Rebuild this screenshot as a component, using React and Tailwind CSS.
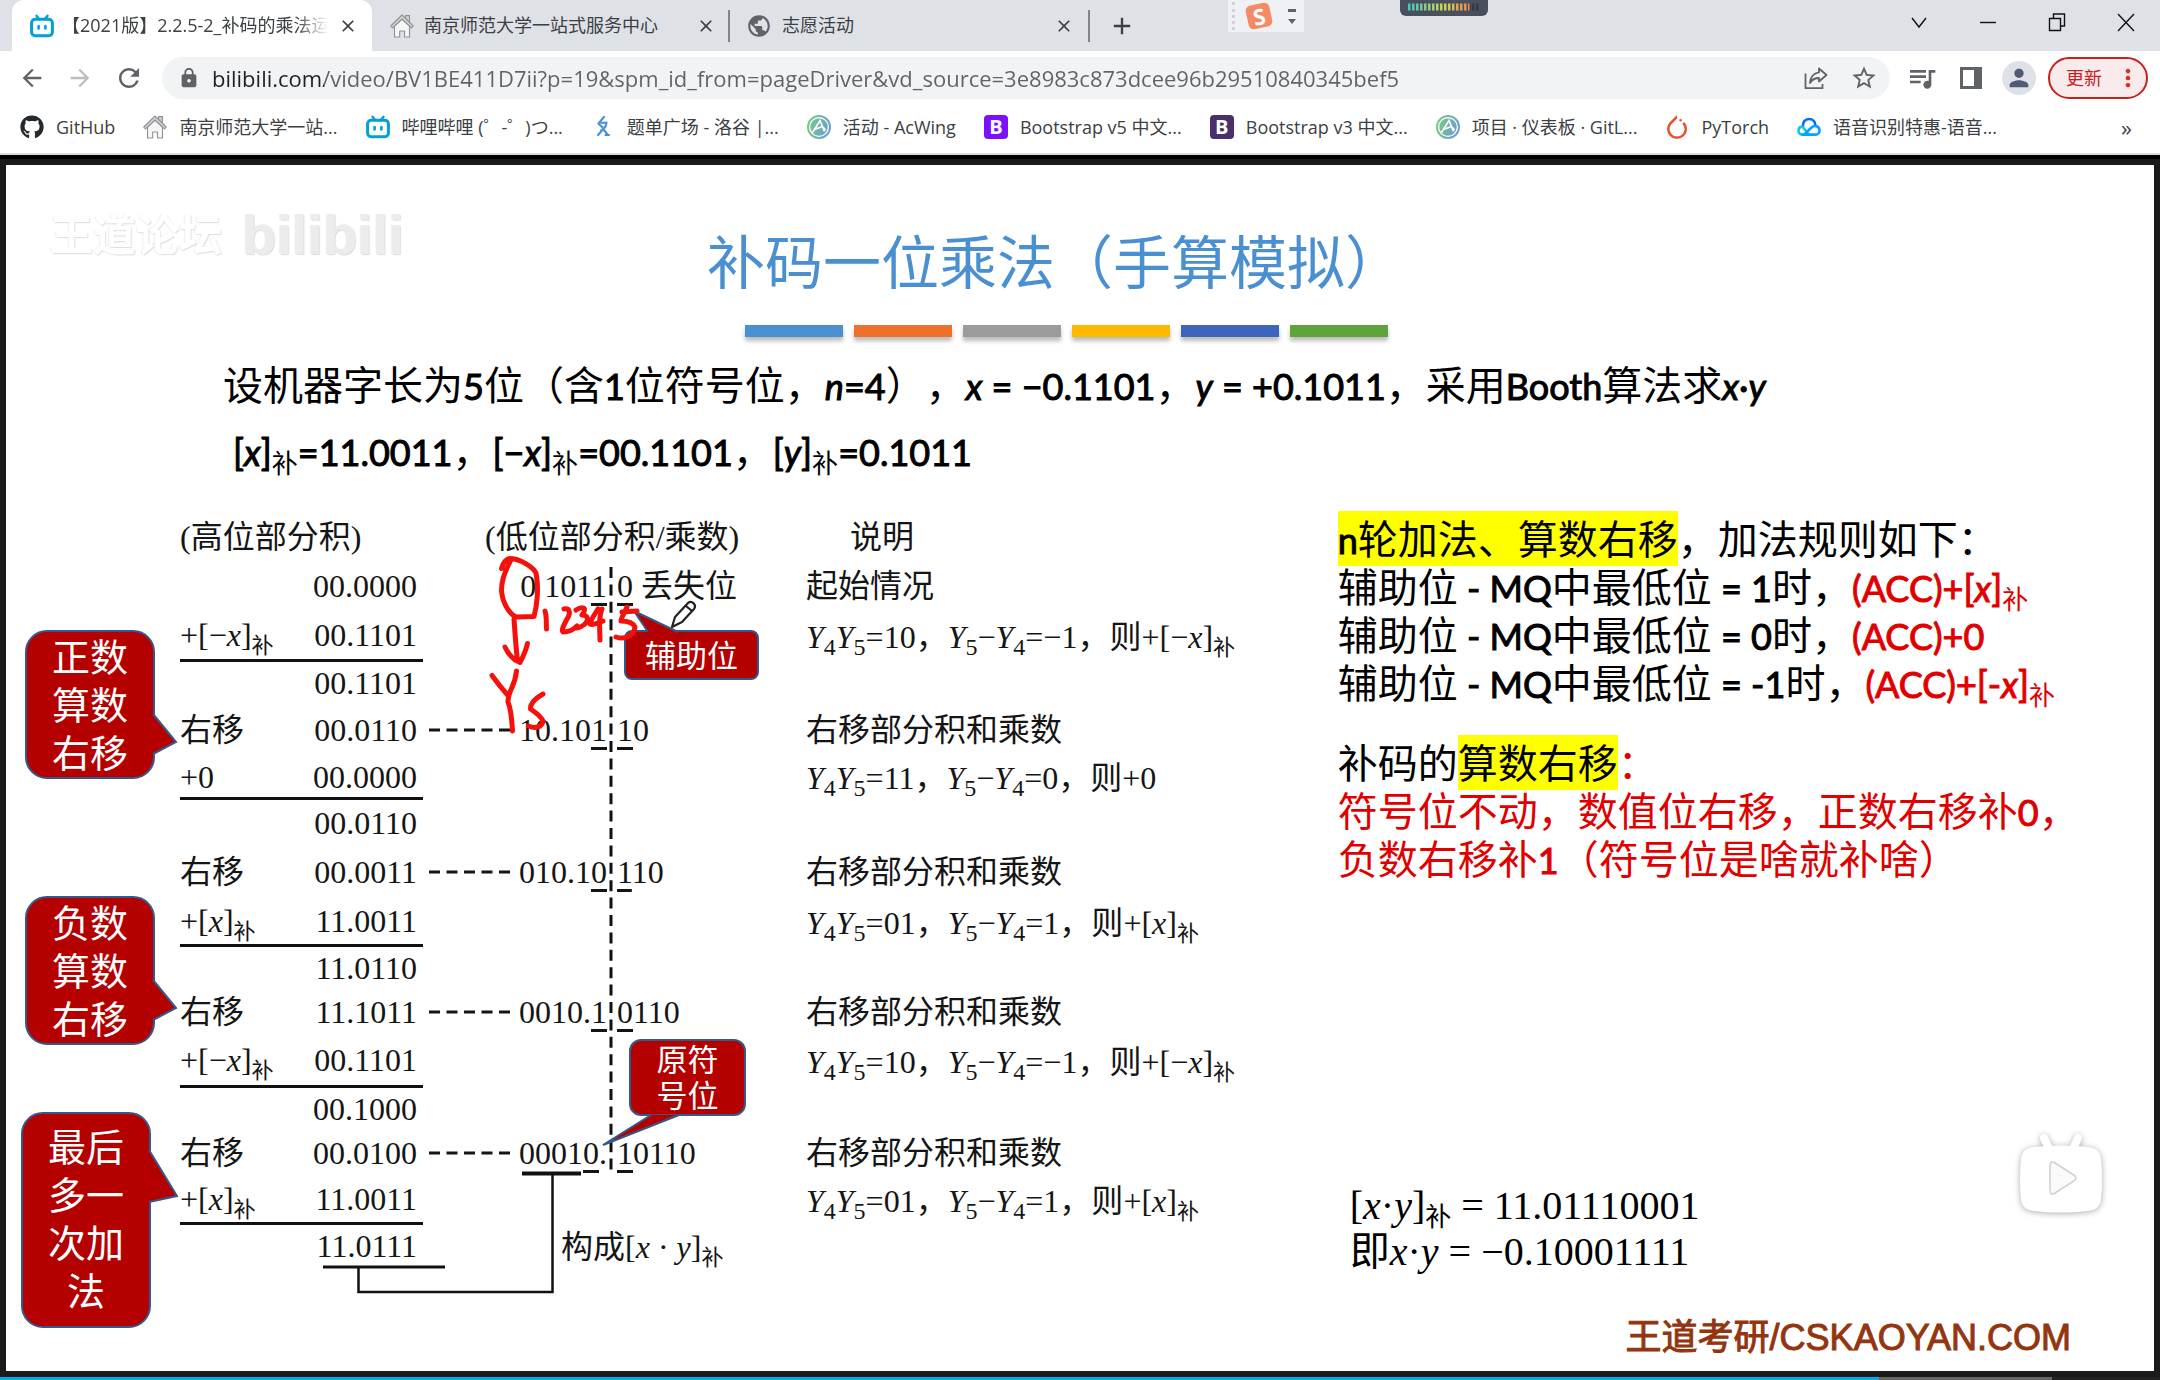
import React from "react";
import {
  MdArrowBack, MdArrowForward, MdRefresh, MdLock, MdStarBorder, MdQueueMusic,
  MdPerson, MdMoreVert, MdPublic, MdClose, MdAdd,
} from "react-icons/md";
import { FaGithub } from "react-icons/fa";
import { SiPytorch } from "react-icons/si";

/* ---------- icons ---------- */

const BiliTv = () => (
  <svg viewBox="0 0 24 24" className="size-6 shrink-0" fill="none" stroke="#00a1d6" strokeWidth="3" strokeLinecap="round" strokeLinejoin="round">
    <path d="M6.5 1.8 9 5M17.5 1.8 15 5" strokeWidth="2.4" />
    <rect x="1.6" y="5.2" width="20.8" height="16.6" rx="3.6" />
    <path d="M8.6 12v2.4M15.4 12v2.4" strokeWidth="2.6" />
  </svg>
);

const House = () => (
  <svg viewBox="0 0 24 24" className="size-6 shrink-0" stroke="#8f9194" strokeWidth="1.1" strokeLinejoin="round">
    <path d="M15.5 4V1.5h4V8" fill="#c9cbce" />
    <path d="M4.5 12v11h5.2v-6h4.8v6h5V12L12 5z" fill="#f6f6f6" />
    <path d="M12 1 .8 12l1.7 1.8L12 5l9.5 8.8 1.7-1.8z" fill="#d3d5d8" />
  </svg>
);

const Luogu = () => (
  <svg viewBox="0 0 16 24" className="size-6 shrink-0" fill="none" stroke="#4b93d8" strokeWidth="2.2" strokeLinecap="round" strokeLinejoin="round">
    <path d="M9 2 3.500 8.500 8 13M6.500 8l5-.5-1 4L3 20M6 15.500l2.500-1L13 20M10.500 20H14" />
  </svg>
);

const AcWing = () => (
  <svg viewBox="0 0 24 24" className="size-6 shrink-0">
    <defs>
      <linearGradient id="acw" x1="0" x2="1" y1="0" y2=".3">
        <stop offset="0" stopColor="#7ccf7a" />
        <stop offset="1" stopColor="#6a9fd0" />
      </linearGradient>
    </defs>
    <circle cx="12" cy="12" r="12" fill="url(#acw)" />
    <circle cx="12" cy="12" r="9.400" fill="none" stroke="#fff" strokeWidth="1.300" />
    <path d="M5.500 17.500 13 5.500l4.500 11M7.500 14.500l8 -3 3 3.500" fill="none" stroke="#fff" strokeWidth="1.700" />
  </svg>
);

const TencentCloud = () => (
  <svg viewBox="0 0 24 24" className="size-6 shrink-0" fill="none" strokeWidth="2.600" strokeLinecap="round">
    <path d="M6 11.500C5.500 7 8 4 12 4s6.500 3 6.300 6" stroke="#006eff" />
    <path d="M12 19.500 6.500 13C5.200 10.600 1.500 12 1.500 15.600c0 2.400 1.700 4 4 4" stroke="#14c6e8" />
    <path d="M5.500 19.600h13c2.300 0 4-1.700 4-4.200 0-4.200-5.200-5.600-7.700-3.100L8 18.600" stroke="#00a3ff" />
  </svg>
);

const Share = () => (
  <svg viewBox="0 0 24 24" className="size-6" fill="none" stroke="#5f6368" strokeWidth="1.800" strokeLinejoin="round">
    <path d="M1.500 7.500v14.700h17V18" />
    <path d="M15 2.500 22.500 9 15 15.500V12c-4.500 0-7 1.500-9 5 .3-5.500 3.500-10 9-10.700z" />
  </svg>
);

const SidePanel = () => (
  <svg viewBox="0 0 22 22" className="size-[22px]">
    <rect x="1.500" y="1.500" width="19" height="19" fill="none" stroke="#5f6368" strokeWidth="3" />
    <rect x="14" y="1" width="7" height="20" fill="#5f6368" />
  </svg>
);

const BBadge = ({ className }) => (
  <span className={"flex size-6 shrink-0 items-center justify-center rounded-[4px] text-[20px] font-bold leading-none text-white " + className}>B</span>
);

/* ---------- browser chrome ---------- */

const CloseTab = () => (
  <button aria-label="关闭标签页" className="flex size-6 shrink-0 items-center justify-center text-[#3c4043]">
    <MdClose className="size-5" />
  </button>
);

function TabStrip() {
  return (
    <header className="flex h-[51px] items-start bg-[#dee1e6] text-[18px] text-[#3c4043]">
      <nav className="flex h-full items-center pl-3">
        <div className="flex h-full w-[360px] items-center rounded-t-xl bg-white pr-3 pl-[18px]">
          <BiliTv />
          <span className="mr-2 ml-2 flex-1 overflow-hidden whitespace-nowrap [mask-image:linear-gradient(to_right,#000_88%,transparent)]">
            【2021版】2.2.5-2_补码的乘法运
          </span>
          <CloseTab />
        </div>
        <div className="flex h-8 w-[358px] items-center border-r-2 border-[#808387] pr-[10px] pl-[18px]">
          <House />
          <span className="ml-[10px] flex-1 whitespace-nowrap">南京师范大学一站式服务中心</span>
          <CloseTab />
        </div>
        <div className="flex h-8 w-[360px] items-center border-r-2 border-[#808387] pr-3 pl-4">
          <MdPublic className="size-[26px] text-[#5f6368]" />
          <span className="ml-[10px] flex-1 whitespace-nowrap">志愿活动</span>
          <CloseTab />
        </div>
        <button aria-label="新标签页" className="ml-4 flex size-8 items-center justify-center">
          <MdAdd className="size-[28px]" />
        </button>
      </nav>
      <div className="ml-[90px] flex h-8 w-[76px] items-center gap-3 bg-[#f0f1f4] pl-1">
        <span className="h-7 border-l-[3px] border-dotted border-[#d0d2d6]" />
        <span className="flex size-6 -rotate-12 items-center justify-center rounded-[5px] bg-[#f58b66] text-[22px] font-bold leading-none text-white">S</span>
        <svg viewBox="0 0 10 18" className="ml-1 h-[18px] w-[10px]" fill="#5f6368">
          <path d="M1 2h8v3H1zM1 12h8l-4 5z" />
        </svg>
      </div>
      <div className="ml-[96px] flex h-4 w-[88px] items-center justify-center rounded-b-md bg-[#4a4f5e]">
        <svg viewBox="0 0 72 10" className="h-[10px] w-[72px]">
          <defs>
            <linearGradient id="meter" gradientUnits="userSpaceOnUse" x1="0" x2="72" y1="0" y2="0">
              <stop offset="0" stopColor="#3fc8c0" />
              <stop offset=".5" stopColor="#c9d84a" />
              <stop offset=".85" stopColor="#f0864a" />
              <stop offset=".86" stopColor="#343848" />
            </linearGradient>
          </defs>
          <path d="M0 4H72" stroke="url(#meter)" strokeWidth="7" strokeDasharray="2.500 1.500" />
        </svg>
      </div>
      <div className="ml-auto flex h-[43px] items-center gap-[45px] pr-[22px]">
        {[
          ["搜索标签页", "M5 8l7 9 7-9"],
          ["最小化", "M4 12.500h16"],
          ["还原", "M4.500 8.500h11v12h-11zM8.500 8v-4h11v12h-4"],
          ["关闭", "M4 4l16 17M20 4 4 21"],
        ].map(([label, d]) => (
          <button key={label} aria-label={label}>
            <svg viewBox="0 0 24 24" className="size-6" fill="none" stroke="#111" strokeWidth="1.400"><path d={d} /></svg>
          </button>
        ))}
      </div>
    </header>
  );
}

function Toolbar() {
  return (
    <div className="flex h-[54px] items-center bg-white pr-3 pl-[18px] text-[#5f6368]">
      <button aria-label="后退"><MdArrowBack className="size-7" /></button>
      <button aria-label="前进" className="ml-5 text-[#bbbdbf]"><MdArrowForward className="size-7" /></button>
      <button aria-label="重新加载" className="ml-5"><MdRefresh className="size-[30px]" /></button>
      <div className="ml-[18px] flex h-[42px] flex-1 items-center rounded-full bg-[#f1f3f4] pr-3 pl-4">
        <MdLock className="size-[22px]" />
        <input
          aria-label="地址栏"
          readOnly
          value="bilibili.com/video/BV1BE411D7ii?p=19&spm_id_from=pageDriver&vd_source=3e8983c873dcee96b29510840345bef5"
          className="ml-3 flex-1 bg-[linear-gradient(90deg,#202124_112px,#5f6368_112px)] bg-clip-text text-[22px] text-transparent outline-none"
        />
        <button aria-label="分享"><Share /></button>
        <button aria-label="收藏" className="ml-[22px]"><MdStarBorder className="size-7" /></button>
      </div>
      <button aria-label="媒体" className="ml-4"><MdQueueMusic className="size-8" /></button>
      <button aria-label="侧边栏" className="ml-[22px]"><SidePanel /></button>
      <button aria-label="用户" className="ml-5 flex size-[34px] items-center justify-center rounded-full bg-[#dee1e6]">
        <MdPerson className="size-7 text-[#4f5b76]" />
      </button>
      <button className="ml-3 flex h-[42px] w-[100px] items-center justify-between rounded-full border-2 border-[#c5221f] bg-[#f9ebeb] pr-1 pl-4 text-[18px] text-[#c5221f]">
        更新
        <MdMoreVert className="size-7 text-[#d93025]" />
      </button>
    </div>
  );
}

const bookmarks = [
  [<FaGithub className="size-6 text-[#24292e]" />, "GitHub"],
  [<House />, "南京师范大学一站..."],
  [<BiliTv />, "哔哩哔哩 (゜-゜)つ..."],
  [<Luogu />, "题单广场 - 洛谷 |..."],
  [<AcWing />, "活动 - AcWing"],
  [<BBadge className="bg-[#7b11f8]" />, "Bootstrap v5 中文..."],
  [<BBadge className="bg-[#4a2f6d]" />, "Bootstrap v3 中文..."],
  [<AcWing />, "项目 · 仪表板 · GitL..."],
  [<SiPytorch className="size-6 text-[#ee4c2c]" />, "PyTorch"],
  [<TencentCloud />, "语音识别特惠-语音..."],
];

function Bookmarks() {
  return (
    <nav className="flex h-[50px] items-center gap-7 border-b-2 border-[#dadcda] bg-white pr-7 pb-1 pl-5 text-[18px] text-[#3c4043]">
      {bookmarks.map(([icon, text]) => (
        <a key={text} href="#" className="flex items-center gap-3 whitespace-nowrap">{icon}{text}</a>
      ))}
      <button aria-label="更多书签" className="ml-auto text-[22px]">»</button>
    </nav>
  );
}

/* ---------- slide pieces ---------- */

const L = ({ children, className = "" }) => (
  <span className={"font-[Lato] text-[36px] leading-none [-webkit-text-stroke:1px] " + className}>{children}</span>
);
const Bu = ({ className = "text-[26px]" }) => (
  <span className={"relative top-[7px] leading-none " + className}>补</span>
);
const U = ({ children }) => (
  <span className="underline decoration-[3px] underline-offset-[6px] [text-decoration-skip-ink:none]">{children}</span>
);
const Br = ({ neg }) => (
  <>+[{neg && "−"}<i>x</i>]<Bu className="text-[22px]" /></>
);
const Sub = ({ children }) => <span className="relative top-[7px] text-[24px] leading-none">{children}</span>;
const Yy = ({ v, d, children }) => (
  <>
    <i>Y</i><Sub>4</Sub><i>Y</i><Sub>5</Sub>={v}，<i>Y</i><Sub>5</Sub>−<i>Y</i><Sub>4</Sub>={d}，则{children}
  </>
);
const shiftNote = "右移部分积和乘数";

const rows = [
  { h: "h-[50px]", n: "00.0000", l: <>0&nbsp;101<U>1</U></>, r: <><U>0</U> 丢失位</>, note: "起始情况" },
  { h: "h-[51px]", a: <Br neg />, n: "00.1101", note: <Yy v="10" d="−1"><Br neg /></Yy>, line: true },
  { h: "h-[42px]", n: "00.1101" },
  { h: "h-[52px]", a: "右移", n: "00.0110", dash: true, l: <>10.10<U>1</U></>, r: <><U>1</U>0</>, note: shiftNote },
  { h: "h-[44px]", a: "+0", n: "00.0000", note: <Yy v="11" d="0">+0</Yy>, line: true },
  { h: "h-[46px]", n: "00.0110" },
  { h: "h-[52px]", a: "右移", n: "00.0011", dash: true, l: <>010.1<U>0</U></>, r: <><U>1</U>10</>, note: shiftNote },
  { h: "h-[49px]", a: <Br />, n: "11.0011", note: <Yy v="01" d="1"><Br /></Yy>, line: true },
  { h: "h-[42px]", n: "11.0110" },
  { h: "h-[46px]", a: "右移", n: "11.1011", dash: true, l: <>0010.<U>1</U></>, r: <><U>0</U>110</>, note: shiftNote },
  { h: "h-[53px]", a: <Br neg />, n: "00.1101", note: <Yy v="10" d="−1"><Br neg /></Yy>, line: true },
  { h: "h-[42px]", n: "00.1000" },
  { h: "h-[46px]", a: "右移", n: "00.0100", dash: true, l: <>0001<U>0</U>.</>, r: <><U>1</U>0110</>, note: shiftNote },
  { h: "h-[49px]", a: <Br />, n: "11.0011", note: <Yy v="01" d="1"><Br /></Yy>, line: true },
  { h: "h-[42px]", n: "11.0111" },
];

function Steps() {
  return (
    <table className="w-full table-fixed border-separate border-spacing-0 text-left text-[32px] leading-[40px] whitespace-nowrap text-[#151515] font-['Liberation_Serif','Noto_Sans_CJK_SC',serif]">
      <colgroup>
        <col className="w-[113px]" /><col className="w-[130px]" /><col className="w-[93px]" />
        <col className="w-[95px]" /><col className="w-[195px]" /><col />
      </colgroup>
      <thead>
        <tr className="h-12">
          <th colSpan={2} className="p-0 font-normal">(高位部分积)</th>
          <th colSpan={3} className="p-0 pl-[62px] font-normal">(低位部分积/乘数)</th>
          <th className="p-0 pl-11 font-normal">说明</th>
        </tr>
      </thead>
      <tbody>
        {rows.map((r, i) => (
          <tr key={i} className={r.h}>
            <td className={r.line ? "border-b-[3px] border-[#111] p-0" : "p-0"}>{r.a}</td>
            <td className={r.line ? "border-b-[3px] border-[#111] p-0 pr-[6px] text-right" : "p-0 pr-[6px] text-right"}>{r.n}</td>
            <td className="p-0 pl-[6px]">
              {r.dash && (
                <svg viewBox="0 0 82 4" className="h-1 w-[82px]"><path d="M0 2h82" stroke="#151515" strokeWidth="3" strokeDasharray="11 6.500" /></svg>
              )}
            </td>
            <td className="p-0 pr-1"><div className="flex justify-end">{r.l && <span>{r.l}</span>}</div></td>
            <td className="p-0 pl-[6px]">{r.r}</td>
            <td className="p-0">{r.note}</td>
          </tr>
        ))}
      </tbody>
    </table>
  );
}

function Callout({ className, lines, pointer }) {
  return (
    <div className={"absolute border-2 border-[#35588a] bg-[#b50000] text-center text-white " + className}>
      {lines.map((t) => <div key={t} className="relative z-10">{t}</div>)}
      <svg className="absolute -top-0.5 -left-0.5 overflow-visible" width="1" height="1">
        <path d={pointer} fill="#b50000" stroke="#35588a" strokeWidth="2" />
      </svg>
    </div>
  );
}

/* Rules, dashed divider and the bracket that joins both halves of the result. */
function Wires() {
  return (
    <svg viewBox="6 513 800 830" width="800" height="830" className="pointer-events-none absolute top-0 left-0" fill="none" stroke="#111">
      <path d="M611 567V1173" strokeWidth="3" strokeDasharray="11 6.400" />
      <path d="M323 1267H445" strokeWidth="3" />
      <path d="M522 1173.500H581" strokeWidth="4" />
      <path d="M358.500 1267V1292H552.500V1174" strokeWidth="2.500" />
    </svg>
  );
}

/* Red pen marks and the pen cursor. */
function Ink() {
  return (
    <svg viewBox="6 513 800 830" width="800" height="830" className="pointer-events-none absolute top-0 left-0" fill="none" stroke="#f5100c" strokeWidth="5" strokeLinecap="round" strokeLinejoin="round">
      <path d="M501.500 568.500C503 562 507 558 511 558.500 520 559 533 567 536 573 539 588 537 606 534 616.500L516 617C508 613 502 601 501.500 590 501.500 576 508 566 511 560" />
      <path d="M514 619C515 634 516 648 517.500 661M505 647C509 656 514 660 520 662.500 524 655 526 650 527.500 643.500" />
      <path d="M492 675.500C498 684 504 691 508.500 696M516.500 671C515 687 508 690 508 702 511 709 512 722 512.500 731" />
      <path d="M543 694C536 698 530 703 530.500 709 535 712 541 716 543 721 542 727 536 729 528.500 726" />
      <path d="M545 611C547 617 546 623 546.500 629" />
      <path d="M564 609C570 608 571 613 567 619 564 625 561 630 563 632 567 632 573 630 577 626" />
      <path d="M576 610C582 606 588 607 582 615 590 615 590 624 577 628" />
      <path d="M598 609C595 614 591 619 590 624 594 626 599 622 603 621M602 609C598 618 600 630 600 640" />
      <path d="M627 607C625 612 621 618 621 621 627 621 633 623 635 627 634 636 625 640 616 637M622 612 637 611" />
      <g stroke="#222" strokeWidth="2.200" fill="#fff">
        <path d="M672 627 675 617 688 603C692 600 697 605 694 609L682 622Z" />
        <path d="M686 606 692 611" />
      </g>
    </svg>
  );
}

const bars = ["bg-[#4a8fd0]", "bg-[#ed702b]", "bg-[#9b9b9b]", "bg-[#ffba00]", "bg-[#3c65bb]", "bg-[#5ea43a]"];

function Slide() {
  return (
    <main className="relative flex-1 overflow-hidden border-x-[6px] border-t-[6px] border-[#1a1a1a] bg-white pt-[61px] pb-2 text-[40px] text-black [text-spacing-trim:space-all]">
      <div className="absolute top-[28px] left-[44px] flex items-center gap-5 whitespace-nowrap text-[43px] font-bold text-white [text-shadow:1px_1px_1px_#ddd,-1px_0_1px_#eee]">
        王道论坛
        <span className="font-['Liberation_Sans'] text-[56px] text-[#ececec]">bilibili</span>
      </div>

      <h1 className="pr-[50px] text-center text-[58px] leading-[72px] text-[#4a8fd0]">补码一位乘法（手算模拟）</h1>
      <div className="mt-[27px] flex justify-center gap-[11px] pr-7">
        {bars.map((c) => <span key={c} className={"h-3 w-[98px] shadow-[0_4px_4px_#0004] " + c} />)}
      </div>

      <p className="mt-[15px] pl-[217px] leading-[66px] whitespace-nowrap">
        设机器字长为<L>5</L>位（含<L>1</L>位符号位，<L><i>n</i>=4</L>），<L><i>x</i> = −0.1101</L>，<L><i>y</i> = +0.1011</L>，采用<L>Booth</L>算法求<L><i>x</i>·<i>y</i></L>
      </p>
      <p className="pl-[227px] leading-[66px] whitespace-nowrap">
        <L>[<i>x</i>]</L><Bu /><L>=11.0011</L>，<L>[−<i>x</i>]</L><Bu /><L>=00.1101</L>，<L>[<i>y</i>]</L><Bu /><L>=0.1011</L>
      </p>

      <section className="relative mt-[29px] flex">
        <div className="w-[62%] pl-[174px]"><Steps /></div>
        <Wires />
        <div className="absolute top-[714px] left-[555px] text-[32px] leading-[40px] text-[#151515] font-['Liberation_Serif','Noto_Sans_CJK_SC',serif]">
          构成[<i>x</i> · <i>y</i>]<Bu className="text-[22px]" />
        </div>

        <Callout className="top-[117px] left-[19px] w-[130px] rounded-[22px] pb-px text-[38px] leading-[48px]" lines={["正数", "算数", "右移"]} pointer="M128 84L151 112L128 124" />
        <Callout className="top-[383px] left-[19px] w-[130px] rounded-[22px] pb-px text-[38px] leading-[48px]" lines={["负数", "算数", "右移"]} pointer="M128 84L151 112L128 124" />
        <Callout className="top-[599px] left-[15px] w-[130px] rounded-[22px] pt-2 pb-3 text-[38px] leading-[48px]" lines={["最后", "多一", "次加", "法"]} pointer="M128 38L156 84L128 90" />
        <Callout className="top-[117px] left-[618px] w-[135px] rounded-[8px] text-[31px] leading-[46px]" lines={["辅助位"]} pointer="M24 2L10 -19L54 2" />
        <Callout className="top-[526px] left-[623px] w-[117px] rounded-[12px] pb-px text-[31px] leading-[36px]" lines={["原符", "号位"]} pointer="M22 76L-26 106L50 76" />
        <Ink />

        <div className="flex flex-1 flex-col pt-0.5 leading-[48px] whitespace-nowrap">
          <p><mark className="bg-[#ff0]"><L>n</L>轮加法、算数右移</mark>，加法规则如下：</p>
          <p>辅助位<L> - MQ</L>中最低位<L> = 1</L>时，<span className="text-[#e00000]"><L>(ACC)+[<i>x</i>]</L><Bu /></span></p>
          <p>辅助位<L> - MQ</L>中最低位<L> = 0</L>时，<L className="text-[#e00000]">(ACC)+0</L></p>
          <p>辅助位<L> - MQ</L>中最低位<L> = -1</L>时，<span className="text-[#e00000]"><L>(ACC)+[-<i>x</i>]</L><Bu /></span></p>
          <p className="mt-8">补码的<mark className="bg-[#ff0]">算数右移</mark><span className="text-[#e00000]">：</span></p>
          <p className="text-[#e00000]">符号位不动，数值位右移，正数右移补<L>0</L>，</p>
          <p className="text-[#e00000]">负数右移补<L>1</L>（符号位是啥就补啥）</p>
          <div className="mt-[300px] pl-3 text-[40px] leading-[46px] font-['Liberation_Serif','Noto_Sans_CJK_SC',serif]">
            <p>[<i>x</i>·<i>y</i>]<Bu /> = 11.01110001</p>
            <p>即<i>x</i>·<i>y</i> = −0.10001111</p>
          </div>
          <p className="mt-[39px] mr-[83px] self-end text-[36px] text-[#93350f] [-webkit-text-stroke:1px] font-['Liberation_Sans','Noto_Sans_CJK_SC',sans-serif]">
            王道考研/CSKAOYAN.COM
          </p>
        </div>

        <button aria-label="播放" className="absolute top-[617px] right-[46px]">
          <svg viewBox="0 0 94 94" className="size-[94px] drop-shadow-[0_1px_3px_#0005]">
            <path d="M30 8 35 19M64 8 59 19" stroke="#fff" strokeWidth="8" strokeLinecap="round" />
            <path d="M20 17Q47 14 74 17 86 18 87 29 89 50 87 69 86 80 74 81 47 84 20 81 8 80 7 69 5 50 7 29 8 18 20 17Z" fill="#fff" />
            <path d="M36 36v24q0 6 5 3l19-12q4-3 0-6L41 33q-5-3-5 3z" fill="#fafafa" stroke="#cfcfcf" strokeWidth="1.500" />
          </svg>
        </button>
      </section>
    </main>
  );
}

export default function App() {
  return (
    <div className="flex min-h-screen flex-col bg-black font-['Open_Sans','Noto_Sans_CJK_SC',sans-serif]" lang="zh-CN">
      <TabStrip />
      <Toolbar />
      <Bookmarks />
      <div className="h-1 bg-black" />
      <Slide />
      <div className="h-[6px] bg-[#1a1a1a]" />
      <div className="flex h-[3px] bg-[#222]">
        <span className="w-[87%] bg-[#00aeec]" />
        <span className="w-[8%] bg-[#666]" />
      </div>
    </div>
  );
}
